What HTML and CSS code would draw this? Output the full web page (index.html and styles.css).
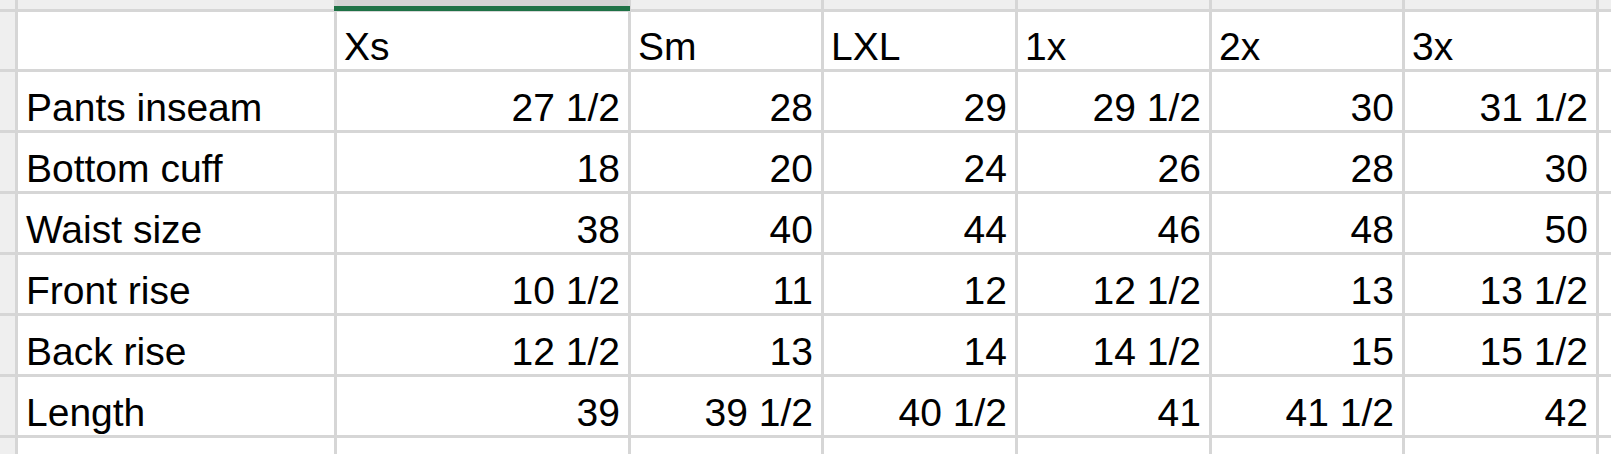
FILE: index.html
```html
<!DOCTYPE html>
<html>
<head>
<meta charset="utf-8">
<link rel="stylesheet" href="styles.css">
</head>
<body>
<div class="sheet">
  <div class="hd"></div><div class="hd"></div><div class="hd sel"></div><div class="hd"></div><div class="hd"></div><div class="hd"></div><div class="hd"></div><div class="hd"></div><div class="hd"></div>

  <div class="rh"></div><div class="c"></div><div class="c">Xs</div><div class="c">Sm</div><div class="c">LXL</div><div class="c">1x</div><div class="c">2x</div><div class="c">3x</div><div class="c"></div>

  <div class="rh"></div><div class="c lbl">Pants inseam</div><div class="c n">27 1/2</div><div class="c n">28</div><div class="c n">29</div><div class="c n">29 1/2</div><div class="c n">30</div><div class="c n">31 1/2</div><div class="c"></div>

  <div class="rh"></div><div class="c lbl">Bottom cuff</div><div class="c n">18</div><div class="c n">20</div><div class="c n">24</div><div class="c n">26</div><div class="c n">28</div><div class="c n">30</div><div class="c"></div>

  <div class="rh"></div><div class="c lbl">Waist size</div><div class="c n">38</div><div class="c n">40</div><div class="c n">44</div><div class="c n">46</div><div class="c n">48</div><div class="c n">50</div><div class="c"></div>

  <div class="rh"></div><div class="c lbl">Front rise</div><div class="c n">10 1/2</div><div class="c n">11</div><div class="c n">12</div><div class="c n">12 1/2</div><div class="c n">13</div><div class="c n">13 1/2</div><div class="c"></div>

  <div class="rh"></div><div class="c lbl">Back rise</div><div class="c n">12 1/2</div><div class="c n">13</div><div class="c n">14</div><div class="c n">14 1/2</div><div class="c n">15</div><div class="c n">15 1/2</div><div class="c"></div>

  <div class="rh"></div><div class="c lbl">Length</div><div class="c n">39</div><div class="c n">39 1/2</div><div class="c n">40 1/2</div><div class="c n">41</div><div class="c n">41 1/2</div><div class="c n">42</div><div class="c"></div>

  <div class="rh"></div><div class="c"></div><div class="c"></div><div class="c"></div><div class="c"></div><div class="c"></div><div class="c"></div><div class="c"></div><div class="c"></div>
</div>
</body>
</html>
```

FILE: styles.css
```css
html, body {
  margin: 0;
  padding: 0;
  background: #ffffff;
  overflow: hidden;
}

.sheet {
  display: grid;
  grid-template-columns: 15px 316px 291px 190px 191px 191px 190px 191px 1fr;
  grid-template-rows: 9px 57px repeat(6, 58px) 1fr;
  gap: 3px;
  width: 1611px;
  height: 454px;
  background: #d6d6d6;
  font-family: "Liberation Sans", Arial, sans-serif;
  font-size: 39px;
  color: #000;
}

.hd, .rh {
  background: #efefef;
}

.hd.sel {
  position: relative;
  background: #d3d3d3;
}

.hd.sel::after {
  content: "";
  position: absolute;
  left: -3px;
  right: -2px;
  bottom: -2px;
  height: 5px;
  background: #1e7145;
}

.c {
  background: #ffffff;
  display: flex;
  align-items: flex-end;
  line-height: 1;
  padding: 0 8px 3px 7px;
  white-space: nowrap;
  overflow: hidden;
}

.c.n {
  justify-content: flex-end;
}

.c.lbl {
  padding-left: 8px;
}
```
